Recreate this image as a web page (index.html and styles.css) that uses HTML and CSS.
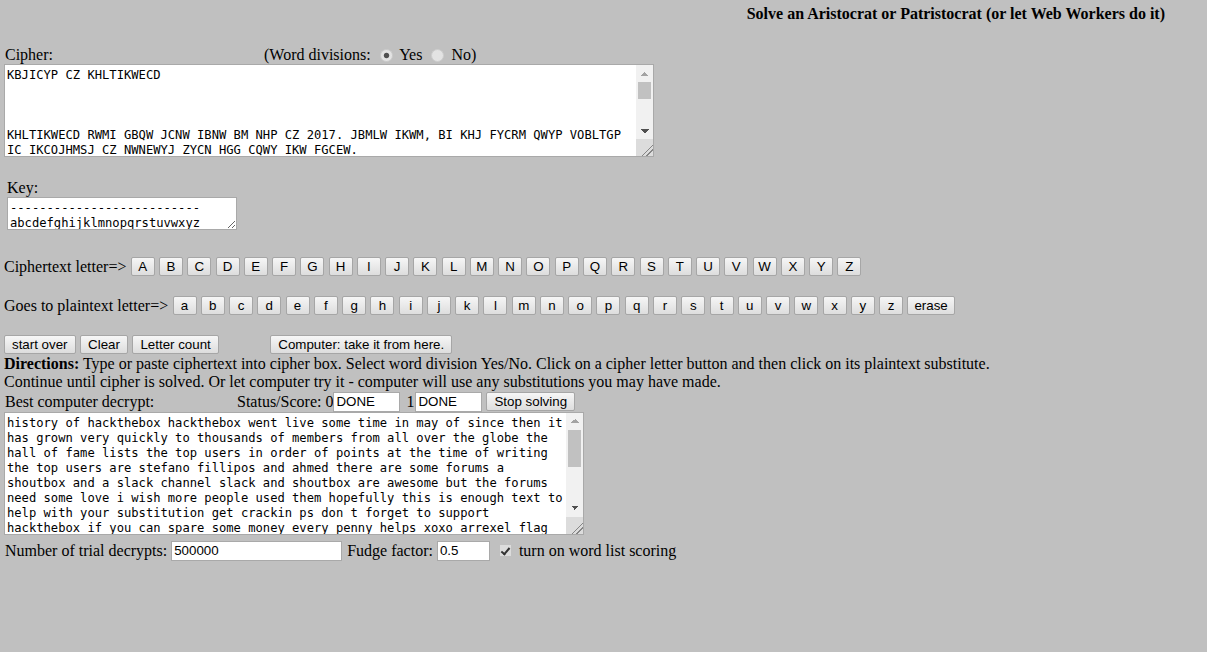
FILE: index.html
```html
<!DOCTYPE html>
<html lang="en">
<head>
<meta charset="utf-8">
<title>Solve an Aristocrat or Patristocrat</title>
<link rel="stylesheet" href="styles.css">
</head>
<body>
<div class="title">Solve an Aristocrat or Patristocrat (or let Web Workers do it)</div>

<div class="cipher-head"><span class="cipher-label">Cipher:</span><span class="divisions">(Word divisions: <input class="radio" type="radio" name="wd" checked> Yes <input class="radio" type="radio" name="wd"> No)</span></div>
<div class="ta-wrap">
<textarea class="cipher scrolled" spellcheck="false">KBJICYP CZ KHLTIKWECD



KHLTIKWECD RWMI GBQW JCNW IBNW BM NHP CZ 2017. JBMLW IKWM, BI KHJ FYCRM QWYP VOBLTGP IC IKCOJHMSJ CZ NWNEWYJ ZYCN HGG CQWY IKW FGCEW.
IKW KHGG CZ ZHNW GBJIJ IKW ICA OJWYJ BM CYSWY CZ ACBMIJ. HI IKW IBNW CZ RYBIBMF, IKW ICA OJWYJ HYW JIWZHMC ZBGGBACJ HMS HKNWS.
IKWYW HYW JCNW ZCYONJ, H JKCOIECD HMS H JGHLT LKHMMWG. JGHLT HMS JKCOIECD HYW HRWJCNW EOI IKW ZCYONJ MWWS JCNW GCQW.
B RBJK NCYW AWCAGW OJWS IKWN. KCAWZOGGP IKBJ BJ WMCOFK IWDI IC KWGA RBIK PCOY JOEJIBIOIBCM.
FWI LYHLTBM!
AJ: SCM'I ZCYFWI IC JOAACYI KHLTIKWECD BZ PCO LHM JAHYW JCNW NCMWP. WQWYP AWMMP KWGAJ!
DCDC HYYWDWG</textarea>
<div class="vscroll" aria-hidden="true"><span class="sb-btn sb-up"></span><span class="sb-track"><span class="sb-thumb cipher-thumb"></span></span><span class="sb-btn sb-down"></span><span class="sb-corner"></span></div>
</div>

<div class="key-block">
  <div class="key-label">Key:</div>
  <textarea class="key" spellcheck="false">--------------------------
abcdefghijklmnopqrstuvwxyz</textarea>
</div>

<div class="letters upper">
  <span class="row-label">Ciphertext letter=&gt;</span>
  <button class="btn letter">A</button><button class="btn letter">B</button><button class="btn letter">C</button><button class="btn letter">D</button><button class="btn letter">E</button><button class="btn letter">F</button><button class="btn letter">G</button><button class="btn letter">H</button><button class="btn letter">I</button><button class="btn letter">J</button><button class="btn letter">K</button><button class="btn letter">L</button><button class="btn letter">M</button><button class="btn letter">N</button><button class="btn letter">O</button><button class="btn letter">P</button><button class="btn letter">Q</button><button class="btn letter">R</button><button class="btn letter">S</button><button class="btn letter">T</button><button class="btn letter">U</button><button class="btn letter">V</button><button class="btn letter">W</button><button class="btn letter">X</button><button class="btn letter">Y</button><button class="btn letter">Z</button>
</div>

<div class="letters lower">
  <span class="row-label">Goes to plaintext letter=&gt;</span>
  <button class="btn letter">a</button><button class="btn letter">b</button><button class="btn letter">c</button><button class="btn letter">d</button><button class="btn letter">e</button><button class="btn letter">f</button><button class="btn letter">g</button><button class="btn letter">h</button><button class="btn letter">i</button><button class="btn letter">j</button><button class="btn letter">k</button><button class="btn letter">l</button><button class="btn letter">m</button><button class="btn letter">n</button><button class="btn letter">o</button><button class="btn letter">p</button><button class="btn letter">q</button><button class="btn letter">r</button><button class="btn letter">s</button><button class="btn letter">t</button><button class="btn letter">u</button><button class="btn letter">v</button><button class="btn letter">w</button><button class="btn letter">x</button><button class="btn letter">y</button><button class="btn letter">z</button><button class="btn erase">erase</button>
</div>

<div class="actions">
  <button class="btn">start over</button><button class="btn">Clear</button><button class="btn">Letter count</button><button class="btn computer">Computer: take it from here.</button>
</div>

<p class="directions"><b>Directions:</b> Type or paste ciphertext into cipher box. Select word division Yes/No. Click on a cipher letter button and then click on its plaintext substitute.<br>Continue until cipher is solved. Or let computer try it - computer will use any substitutions you may have made.</p>

<div class="status-row">
  <span class="best">Best computer decrypt:</span><span>Status/Score: 0</span><input class="field status" value="DONE"><span class="one">1</span><input class="field status" value="DONE"><button class="btn stop">Stop solving</button>
</div>

<div class="ta-wrap">
<textarea class="output scrolled" spellcheck="false">history of hackthebox hackthebox went live some time in may of since then it
has grown very quickly to thousands of members from all over the globe the
hall of fame lists the top users in order of points at the time of writing
the top users are stefano fillipos and ahmed there are some forums a
shoutbox and a slack channel slack and shoutbox are awesome but the forums
need some love i wish more people used them hopefully this is enough text to
help with your substitution get crackin ps don t forget to support
hackthebox if you can spare some money every penny helps xoxo arrexel flag</textarea>
<div class="vscroll" aria-hidden="true"><span class="sb-btn sb-up"></span><span class="sb-track"><span class="sb-thumb output-thumb"></span></span><span class="sb-btn sb-down"></span><span class="sb-corner"></span></div>
</div>

<div class="params">
  <span>Number of trial decrypts:</span><input class="field trials" value="500000"><span class="fudge-label">Fudge factor:</span><input class="field fudge" value="0.5"><input class="check" type="checkbox" checked><span class="check-label">turn on word list scoring</span>
</div>
</body>
</html>
```

FILE: styles.css
```css
html, body {
  margin: 0;
  background: #c0c0c0;
}

body {
  padding: 5px 0 0 4px;
  font-family: "Liberation Serif", "Times New Roman", serif;
  font-size: 16px;
  color: #000;
  line-height: 18px;
}

.title {
  text-align: right;
  padding-right: 42px;
  font-weight: bold;
  height: 18px;
}

.cipher-head {
  margin-top: 22px;
  height: 19px;
  line-height: 19px;
  display: flex;
}

.cipher-label {
  width: 260px;
  padding-left: 1px;
  box-sizing: border-box;
}

.radio {
  -webkit-appearance: none;
  appearance: none;
  width: 13px;
  height: 13px;
  margin: 3px 3px 0 5px;
  border: 1px solid #cdcdcd;
  border-radius: 50%;
  background: #e3e3e3;
  box-sizing: border-box;
  vertical-align: -2px;
}

.radio:checked {
  background: radial-gradient(circle, #505050 0, #505050 2.2px, #e3e3e3 3.2px);
}

textarea {
  display: block;
  box-sizing: border-box;
  margin: 0;
  padding: 3px 2px 1px 2px;
  border: 1px solid #a9a9a9;
  background: #fff;
  font-family: "DejaVu Sans Mono", "Liberation Mono", monospace;
  font-size: 12.15px;
  line-height: 15px;
  color: #000;
}

.ta-wrap {
  position: relative;
  width: fit-content;
}

.scrolled {
  padding-right: 19px;
  overflow: hidden;
  resize: none;
}

.cipher {
  width: 650px;
  height: 93px;
}

.output {
  width: 580px;
  height: 123px;
}

/* drawn vertical scrollbar, lying over the textarea's right edge */
.vscroll {
  position: absolute;
  top: 1px;
  right: 1px;
  bottom: 1px;
  width: 17px;
  display: flex;
  flex-direction: column;
  background: #f1f1f1;
}

.sb-btn {
  display: block;
  height: 17px;
  flex: none;
}

.sb-up {
  background:
    linear-gradient(to bottom right, transparent 50%, #a3a3a3 50%) 4.5px 6.5px / 4px 4px no-repeat,
    linear-gradient(to bottom left, transparent 50%, #a3a3a3 50%) 8.5px 6.5px / 4px 4px no-repeat;
}

.sb-down {
  background:
    linear-gradient(to top right, transparent 50%, #505050 50%) 4.5px 6.5px / 4px 4px no-repeat,
    linear-gradient(to top left, transparent 50%, #505050 50%) 8.5px 6.5px / 4px 4px no-repeat;
}

.sb-track {
  display: block;
  flex: 1;
  padding: 0 2px;
}

.sb-thumb {
  display: block;
  background: #c1c1c1;
}

.cipher-thumb {
  height: 17px;
}

.output-thumb {
  height: 37px;
}

.sb-corner {
  display: block;
  flex: none;
  height: 17px;
  background:
    linear-gradient(135deg, transparent 15.8px, #858585 15.8px, #858585 16.9px, transparent 16.9px, transparent 19px, #858585 19px, #858585 20.1px, transparent 20.1px),
    #dcdcdc;
}

.key-block {
  margin: 22px 0 0 3px;
}

.key-label {
  height: 18px;
}

.key {
  width: 230px;
  height: 33px;
  overflow: hidden;
  resize: both;
}

.letters {
  display: flex;
  align-items: center;
  gap: 4.28px;
  height: 19px;
}

.upper {
  margin-top: 27px;
}

.lower {
  margin-top: 20px;
}

.row-label {
  white-space: nowrap;
}

.btn {
  box-sizing: border-box;
  height: 19px;
  margin: 0;
  padding: 0 7px;
  border: 1px solid #a6a6a6;
  border-radius: 2px;
  background: linear-gradient(#f6f6f6, #dddddd);
  font-family: "Liberation Sans", Arial, sans-serif;
  font-size: 13.333px;
  line-height: 17px;
  color: #000;
  white-space: nowrap;
}

.letter {
  width: 24px;
  padding: 0;
  text-align: center;
}

.erase {
  padding: 0 6px;
}

.actions {
  margin-top: 20px;
  display: flex;
  gap: 4.5px;
  height: 19px;
}

.computer {
  margin-left: 47px;
}

.directions {
  margin: 0;
  padding-top: 1px;
  line-height: 18.4px;
}

.status-row {
  height: 20px;
  display: flex;
  align-items: center;
}

.best {
  width: 233px;
  padding-left: 1px;
  box-sizing: border-box;
}

.field {
  box-sizing: border-box;
  height: 20px;
  margin: 0;
  padding: 1px 2px;
  border: 1px solid #a9a9a9;
  background: #fff;
  font-family: "Liberation Sans", Arial, sans-serif;
  font-size: 13.333px;
  color: #000;
}

.status {
  width: 67px;
}

.one {
  margin: 0 1px 0 6px;
}

.stop {
  margin-left: 4px;
}

.params {
  margin-top: 6px;
  height: 20px;
  display: flex;
  align-items: center;
  padding-left: 1px;
}

.trials {
  width: 171px;
  margin-left: 4px;
}

.fudge-label {
  margin-left: 5px;
}

.fudge {
  width: 53px;
  margin-left: 4px;
}

.check {
  -webkit-appearance: none;
  appearance: none;
  position: relative;
  width: 11px;
  height: 11px;
  margin: 0 0 0 10px;
  border: 0;
  background: #dcdcdc;
  box-sizing: border-box;
}

.check:checked::after {
  content: "";
  position: absolute;
  left: 3.5px;
  top: 0.5px;
  width: 3px;
  height: 7px;
  border-right: 2px solid #333;
  border-bottom: 2px solid #333;
  transform: rotate(40deg);
}

.check-label {
  margin-left: 8px;
}
```
